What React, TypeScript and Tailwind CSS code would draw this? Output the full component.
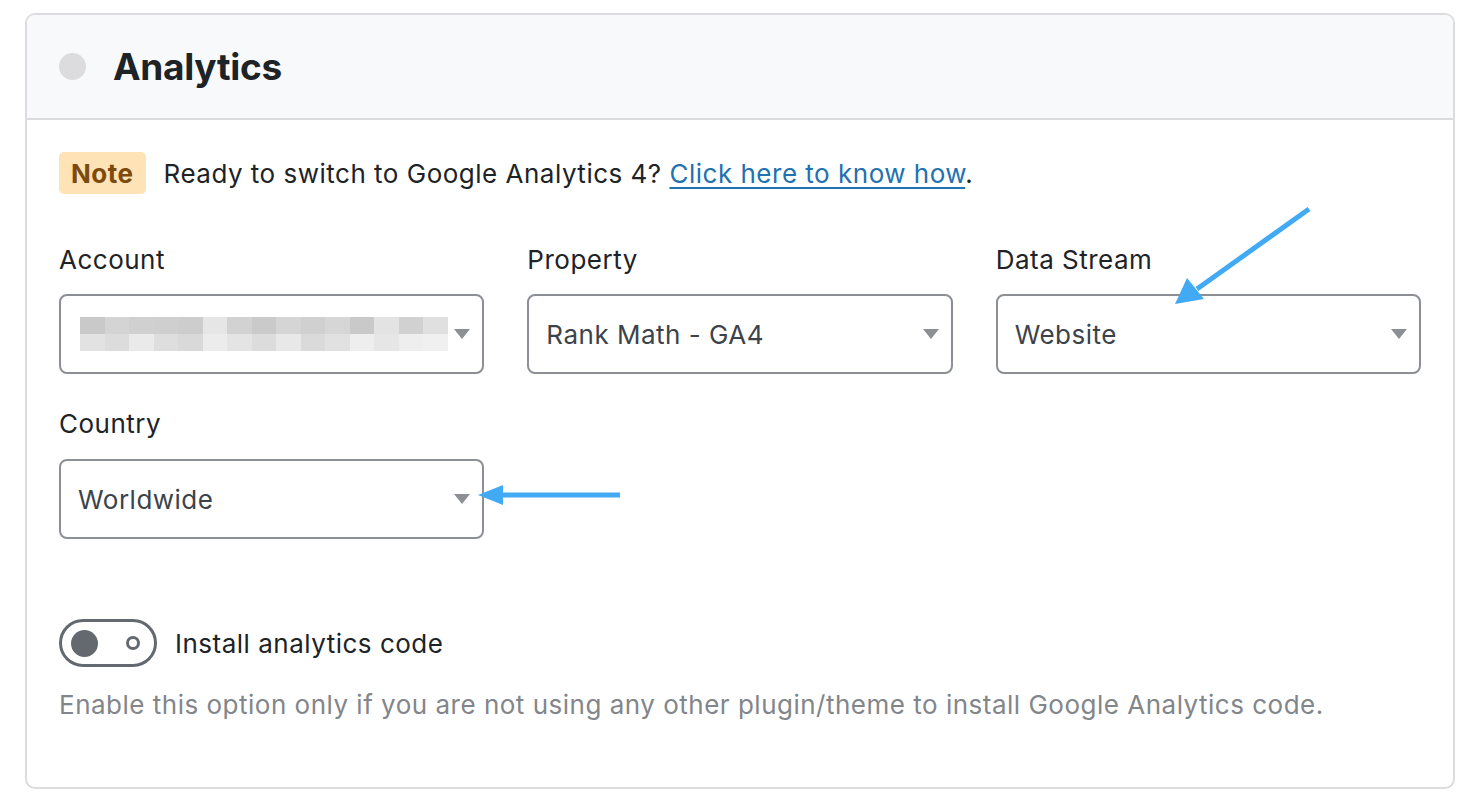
import React from "react";

const font = { fontFamily: "Inter, 'Noto Sans', sans-serif" };

function Caret() {
  return (
    <svg width="16" height="10" viewBox="0 0 16 10" className="shrink-0">
      <path d="M0 0 L16 0 L8 10 Z" fill="#8c8f94" />
    </svg>
  );
}

function SelectBox({ children }: { children?: React.ReactNode }) {
  return (
    <div className="h-[80px] border-2 border-[#8c8f94] rounded-[8px] flex items-center justify-between pl-[17px] pr-[12px] bg-white">
      <div className="text-[26px] tracking-[0.5px] text-[#3c434a] truncate">{children}</div>
      <Caret />
    </div>
  );
}

function Blurred() {
  // pixelated placeholder for the hidden account name
  const top = ["#c9c9c9", "#d4d4d4", "#d0d0d0", "#cfcfcf", "#cdcdcd", "#e6e6e6", "#d2d2d2", "#cacaca", "#d5d5d5", "#d0d0d0", "#d6d6d6", "#c9c9c9", "#e3e3e3", "#d1d1d1", "#e0e0e0"];
  const bot = ["#e2e2e2", "#dcdcdc", "#eaeaea", "#dedede", "#d9d9d9", "#ececec", "#e4e4e4", "#dcdcdc", "#e8e8e8", "#dadada", "#e1e1e1", "#eeeeee", "#e6e6e6", "#eeeeee", "#f0f0f0"];
  return (
    <div className="flex flex-col">
      <div className="flex">
        {top.map((c, i) => (
          <div key={i} className="w-[24.5px] h-[17px]" style={{ background: c }} />
        ))}
      </div>
      <div className="flex">
        {bot.map((c, i) => (
          <div key={i} className="w-[24.5px] h-[17px]" style={{ background: c }} />
        ))}
      </div>
    </div>
  );
}

export default function App() {
  return (
    <div className="bg-white min-h-screen pt-[13px] pl-[25px] pr-[27px] pb-[15px]" style={font}>
      <div className="relative border-2 border-[#dcdcde] rounded-[10px] overflow-hidden">
        <div className="h-[105px] bg-[#f8f9fa] border-b-2 border-[#dcdcde] flex items-center pl-[32px] gap-[27px]">
          <div className="w-[27px] h-[27px] rounded-full bg-[#dcdcde]" />
          <h2 className="text-[37px] font-bold text-[#1d2327] tracking-[-0.3px]">Analytics</h2>
        </div>

        <div className="px-[32px] pt-[32px] pb-[64px]">
          <div className="flex items-center gap-[18px] h-[42px]">
            <span className="h-[42px] flex items-center px-[12px] rounded-[5px] bg-[#fde3b5] text-[#7d4a0e] font-bold text-[26px] tracking-[0.5px]">
              Note
            </span>
            <span className="text-[26px] tracking-[0.5px] text-[#1d2327]">
              Ready to switch to Google Analytics 4?{" "}
              <a className="text-[#2271b1] underline underline-offset-[4px]">Click here to know how</a>.
            </span>
          </div>

          <div className="grid grid-cols-3 gap-x-[43px] mt-[48px]">
            <div>
              <div className="text-[26px] tracking-[0.5px] text-[#1d2327] leading-[36px] mb-[16px]">Account</div>
              <div className="h-[80px] border-2 border-[#8c8f94] rounded-[8px] flex items-center justify-between pl-[19px] pr-[12px] bg-white">
                <Blurred />
                <Caret />
              </div>
            </div>
            <div>
              <div className="text-[26px] tracking-[0.5px] text-[#1d2327] leading-[36px] mb-[16px]">Property</div>
              <SelectBox>Rank Math - GA4</SelectBox>
            </div>
            <div>
              <div className="text-[26px] tracking-[0.5px] text-[#1d2327] leading-[36px] mb-[16px]">Data Stream</div>
              <SelectBox>Website</SelectBox>
            </div>
            <div className="mt-[32px]">
              <div className="text-[26px] tracking-[0.5px] text-[#1d2327] leading-[36px] mb-[17px]">Country</div>
              <SelectBox>Worldwide</SelectBox>
            </div>
          </div>

          <div className="flex items-center gap-[18px] mt-[80px]">
            <div className="w-[98px] h-[48px] rounded-full border-[3px] border-[#646970] flex items-center justify-between pl-[9px] pr-[14px]">
              <div className="w-[27px] h-[27px] rounded-full bg-[#646970]" />
              <div className="w-[14px] h-[14px] rounded-full border-[3px] border-[#646970]" />
            </div>
            <span className="text-[26px] tracking-[0.5px] text-[#1d2327]">Install analytics code</span>
          </div>

          <p className="text-[26px] tracking-[0.5px] text-[#82868b] leading-[36px] mt-[20px]">
            Enable this option only if you are not using any other plugin/theme to install Google Analytics code.
          </p>
        </div>

        <svg className="absolute left-0 top-0 pointer-events-none" width="1430" height="774">
          <g stroke="#42aaf5" strokeWidth="5" strokeLinecap="butt" fill="#42aaf5">
            <line x1="1282" y1="194" x2="1170" y2="274" />
            <path d="M1148 289 L1160 263 L1177 284 Z" stroke="none" />
            <line x1="593" y1="480" x2="470" y2="480" />
            <path d="M451 480 L476 470 L476 490 Z" stroke="none" />
          </g>
        </svg>
      </div>
    </div>
  );
}
